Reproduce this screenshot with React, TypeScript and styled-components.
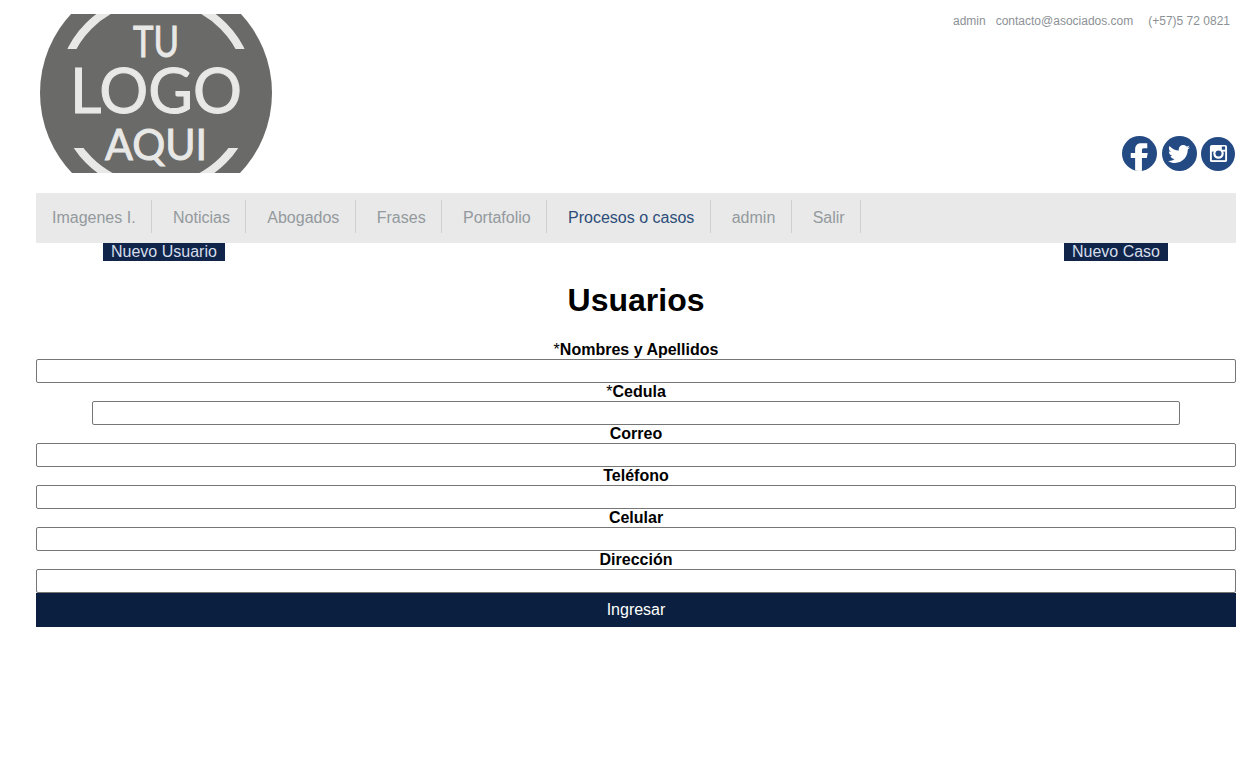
import React from 'react'
import styled, { createGlobalStyle } from 'styled-components'
import { FaTwitter } from 'react-icons/fa'

const GlobalStyle = createGlobalStyle`
    html, body {
        margin: 0;
        padding: 0;
        background: #fff;
        font-family: "Liberation Sans", Arial, sans-serif;
    }
`

const Page = styled.div`
    width: 1200px;
    margin-left: 36px;
    padding-top: 14px;
    min-height: 755px;
`

const Header = styled.header`
    display: flex;
    justify-content: space-between;
    height: 159px;
    margin-bottom: 20px;
`

const LogoImage = styled.svg`
    display: block;
    width: 240px;
    height: 159px;
`

const HeaderSide = styled.div`
    display: flex;
    flex-direction: column;
    justify-content: space-between;
    align-items: flex-end;
`

const ContactLine = styled.div`
    display: flex;
    padding-right: 6px;
    font-size: 12px;
    line-height: 14px;
    color: #8c9196;
`

const ContactItem = styled.span<{ $gap: number }>`
    margin-left: ${(p) => p.$gap}px;
`

const SocialRow = styled.div`
    display: flex;
    gap: 4.5px;
    padding-right: 1px;
    padding-bottom: 2px;
    align-items: center;
`

const SocialBadge = styled.a<{ $size: number }>`
    display: flex;
    align-items: center;
    justify-content: center;
    width: ${(p) => p.$size}px;
    height: ${(p) => p.$size}px;
    border-radius: 50%;
    background: #234a82;
    color: #fff;
    overflow: hidden;
`

const Nav = styled.nav`
    display: flex;
    height: 50px;
    padding: 7px 0 10px;
    box-sizing: border-box;
    background: #e9e9e9;
`

const NavItem = styled.a<{ $active?: boolean; $first?: boolean }>`
    display: flex;
    align-items: center;
    padding: 2px 15.4px 0 ${(p) => (p.$first ? 16 : 21)}px;
    border-right: 1px solid #cfd0d0;
    font-size: 16px;
    color: ${(p) => (p.$active ? '#2c4d78' : '#93999d')};
`

const ActionRow = styled.div`
    display: flex;
    justify-content: space-between;
    padding: 0 68px 0 67px;
`

const ActionLink = styled.a`
    display: block;
    padding: 0 8px;
    height: 18px;
    line-height: 18px;
    font-size: 16px;
    background: #11254a;
    color: #d5deea;
`

const Title = styled.h1`
    margin: 21px 0 22px;
    font-size: 32px;
    line-height: 37px;
    font-weight: bold;
    color: #000;
    text-align: center;
`

const Form = styled.form`
    display: flex;
    flex-direction: column;
    align-items: center;
`

const FieldLabel = styled.label`
    display: block;
    height: 18px;
    line-height: 18px;
    font-size: 16px;
    font-weight: bold;
    color: #000;
    text-align: center;
`

const Required = styled.span`
    font-weight: normal;
`

const TextInput = styled.input<{ $width?: number }>`
    display: block;
    box-sizing: border-box;
    width: ${(p) => p.$width ?? 1200}px;
    height: 24px;
    margin: 0;
    padding: 1px 2px;
    border: 1px solid #767676;
    border-radius: 2px;
    background: #fff;
`

const SubmitButton = styled.button`
    display: block;
    width: 100%;
    height: 34px;
    border: 0;
    padding: 0;
    background: #0b2040;
    color: #fff;
    font-family: inherit;
    font-size: 16px;
`

const navItems = ['Imagenes I.', 'Noticias', 'Abogados', 'Frases', 'Portafolio', 'Procesos o casos', 'admin', 'Salir']

const fields = [
    { label: 'Nombres y Apellidos', required: true },
    { label: 'Cedula', required: true, width: 1088 },
    { label: 'Correo' },
    { label: 'Teléfono' },
    { label: 'Celular' },
    { label: 'Dirección' },
]

const Logo: React.FC = () => (
    <LogoImage viewBox="0 0 240 159">
        <defs>
            <clipPath id="logo-arcs">
                <rect x="0" y="0" width="240" height="35" />
                <rect x="0" y="134" width="240" height="25" />
            </clipPath>
        </defs>
        <circle cx="120" cy="79" r="116" fill="#6a6a68" />
        <circle cx="120" cy="79" r="95" fill="none" stroke="#e8e8e6" strokeWidth="8" clipPath="url(#logo-arcs)" />
        <g fill="#e8e8e6" stroke="#e8e8e6" strokeWidth="1" fontFamily="Lato, sans-serif" textAnchor="middle">
            <text x="120" y="43" fontSize="43" textLength="46" lengthAdjust="spacingAndGlyphs">TU</text>
            <text x="120" y="99" fontSize="61" textLength="172" lengthAdjust="spacingAndGlyphs">LOGO</text>
            <text x="120" y="146" fontSize="43" textLength="102" lengthAdjust="spacingAndGlyphs">AQUI</text>
        </g>
    </LogoImage>
)

const FacebookGlyph: React.FC = () => (
    <svg width="35" height="35" viewBox="0 0 36 36">
        <path
            fill="#fff"
            d="M13.5 36V22.5H9v-5h4.5V14c0-4.5 2.5-6.5 6.500-6.500h6v5h-3.500c-1.500 0-2 .8-2 2.500v2.500h6l-1 5h-5V36z"
        />
    </svg>
)

const InstagramGlyph: React.FC = () => (
    <svg width="19" height="19" viewBox="0 0 20 20">
        <rect x="1" y="1" width="18" height="18" rx="2" fill="#fff" />
        <rect x="3" y="8" width="14" height="9" fill="#234a82" />
        <circle cx="10" cy="10" r="5.500" fill="#fff" />
        <circle cx="10" cy="10" r="3.200" fill="#234a82" />
        <rect x="13.500" y="2.500" width="3.500" height="3.500" rx=".5" fill="#234a82" />
    </svg>
)

export default function App() {
    return (
        <Page>
            <GlobalStyle />
            <Header>
                <Logo />
                <HeaderSide>
                    <ContactLine>
                        <ContactItem $gap={0}>admin</ContactItem>
                        <ContactItem $gap={10}>contacto@asociados.com</ContactItem>
                        <ContactItem $gap={15}>(+57)5 72 0821</ContactItem>
                    </ContactLine>
                    <SocialRow>
                        <SocialBadge $size={35}><FacebookGlyph /></SocialBadge>
                        <SocialBadge $size={35}><FaTwitter size={22} /></SocialBadge>
                        <SocialBadge $size={34}><InstagramGlyph /></SocialBadge>
                    </SocialRow>
                </HeaderSide>
            </Header>
            <Nav>
                {navItems.map((item, idx) => (
                    <NavItem key={item} $first={idx === 0} $active={item === 'Procesos o casos'}>{item}</NavItem>
                ))}
            </Nav>
            <ActionRow>
                <ActionLink>Nuevo Usuario</ActionLink>
                <ActionLink>Nuevo Caso</ActionLink>
            </ActionRow>
            <Title>Usuarios</Title>
            <Form>
                {fields.map((field) => (
                    <React.Fragment key={field.label}>
                        <FieldLabel>
                            {field.required && <Required>*</Required>}
                            {field.label}
                        </FieldLabel>
                        <TextInput type="text" $width={field.width} />
                    </React.Fragment>
                ))}
                <SubmitButton type="button">Ingresar</SubmitButton>
            </Form>
        </Page>
    )
}
